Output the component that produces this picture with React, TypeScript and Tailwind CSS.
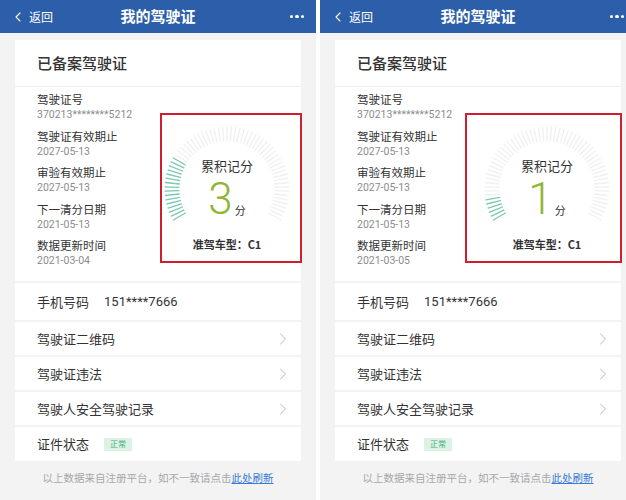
import { ChevronLeft, ChevronRight } from 'lucide-react';

interface PanelProps {
  points     : number;
  updated    : string;
  boxLeft    : number;
  boxWidth   : number;
}

const INFO = [
  { label: '驾驶证号',       value: '370213********5212' },
  { label: '驾驶证有效期止', value: '2027-05-13' },
  { label: '审验有效期止',   value: '2027-05-13' },
  { label: '下一清分日期',   value: '2021-05-13' },
];

const LINKS = ['驾驶证二维码', '驾驶证违法', '驾驶人安全驾驶记录'];

function Gauge({ points }: { points: number }) {
  // 240° dial, 12 points max, ticks every 4°
  const cx = 70, cy = 70, r1 = 48, r2 = 62;
  const fillTo = 210 - (points / 12) * 240;
  const ticks = [];
  for (let i = 0; i <= 60; i++) {
    const a = 210 - i * 4;
    const t = (a * Math.PI) / 180;
    const on = a >= fillTo - 0.1;
    ticks.push(
      <line key={i}
            x1={cx + r1 * Math.cos(t)} y1={cy - r1 * Math.sin(t)}
            x2={cx + r2 * Math.cos(t)} y2={cy - r2 * Math.sin(t)}
            stroke={on ? '#7cc8b2' : '#f0f0f0'} strokeWidth={1.3} strokeLinecap="round" />
    );
  }
  return (
    <div className="relative w-[140px] h-[140px] flex flex-col items-center">
      <svg width="140" height="140" className="absolute left-0 top-0">{ticks}</svg>
      <div className="relative pt-[38px] text-[13px] leading-[18px] text-[#333]">累积记分</div>
      <div className="relative mt-[2px] flex items-end h-[44px]">
        <span className="text-[44px] leading-[44px] font-light text-[#8fb633] font-['Roboto',sans-serif]">{points}</span>
        <span className="ml-[2px] mb-[5px] text-[11px] leading-[12px] text-[#333]">分</span>
      </div>
      <div className="relative mt-[15px] text-[11px] leading-[16px] font-semibold text-[#333] whitespace-nowrap">准驾车型：C1</div>
    </div>
  );
}

function Panel({ points, updated, boxLeft, boxWidth }: PanelProps) {
  const info = [...INFO, { label: '数据更新时间', value: updated }];
  return (
    <div className="relative w-[316px] shrink-0 h-[500px] bg-[#f3f3f3] font-['Noto_Sans_CJK_SC',sans-serif]">
      {/* Header */}
      <div className="h-[33px] bg-[#2c5ea9] flex items-center px-[10px] text-white">
        <div className="flex items-center w-[80px]">
          <ChevronLeft size={16} strokeWidth={1.6} />
          <span className="ml-[3px] text-[12px]">返回</span>
        </div>
        <div className="flex-1 text-center text-[15px] font-bold">我的驾驶证</div>
        <div className="w-[80px] flex justify-end gap-[2px] pr-[2px]">
          <span className="w-[3.5px] h-[3.5px] rounded-full bg-white" />
          <span className="w-[3.5px] h-[3.5px] rounded-full bg-white" />
          <span className="w-[3.5px] h-[3.5px] rounded-full bg-white" />
        </div>
      </div>

      <div className="px-[15px] pt-[7px] flex flex-col">
        {/* Title */}
        <div className="h-[47px] bg-white flex items-center pl-[22px] text-[15px] font-medium text-[#333] border-b border-[#eeeeee]">
          已备案驾驶证
        </div>

        {/* Info */}
        <div className="bg-white flex pl-[22px] pr-[4px] pt-[4px] pb-[12px]">
          <div className="w-[120px] flex flex-col gap-[4.5px]">
            {info.map((it) => (
              <div key={it.label}>
                <div className="text-[11.5px] leading-[16px] text-[#333]">{it.label}</div>
                <div className="text-[10.5px] leading-[16px] text-[#8c8c8c] font-['Roboto',sans-serif]">{it.value}</div>
              </div>
            ))}
          </div>
          <div className="flex-1 flex justify-center pt-[28px]">
            <Gauge points={points} />
          </div>
        </div>

        {/* Rows */}
        <div className="mt-[2px] flex flex-col gap-[2px]">
          <div className="h-[37px] bg-white flex items-center pl-[22px] text-[13px] text-[#333]">
            <span>手机号码</span>
            <span className="ml-[15px] font-['Roboto',sans-serif]">151****7666</span>
          </div>
          {LINKS.map((l) => (
            <div key={l} className="h-[33px] bg-white flex items-center pl-[22px] pr-[8px] text-[13px] text-[#333]">
              <span className="flex-1">{l}</span>
              <ChevronRight size={20} strokeWidth={1.1} color="#b0b0b0" />
            </div>
          ))}
          <div className="h-[34px] bg-white flex items-center pl-[22px] text-[13px] text-[#333]">
            <span>证件状态</span>
            <span className="ml-[15px] px-[6px] h-[13px] flex items-center bg-[#dcf2e5] text-[#45b07c] text-[8px]">正常</span>
          </div>
        </div>

        <div className="mt-[9px] text-center text-[10.5px] text-[#a8a8a8] whitespace-nowrap">
          以上数据来自注册平台，如不一致请点击<span className="text-[#3a7bd5] underline">此处刷新</span>
        </div>
      </div>

      {/* red annotation box */}
      <div className="absolute top-[113px] h-[150px] border-2 border-[#cf1f2e]"
           style={{ left: boxLeft, width: boxWidth }} />
    </div>
  );
}

export default function App() {
  return (
    <div className="w-[626px] h-[500px] bg-white flex overflow-hidden">
      <Panel points={3} updated="2021-03-04" boxLeft={160} boxWidth={142} />
      <div className="w-[4px] shrink-0 bg-white" />
      <div className="w-[306px] overflow-hidden shrink-0">
        <Panel points={1} updated="2021-03-05" boxLeft={145} boxWidth={157} />
      </div>
    </div>
  );
}
